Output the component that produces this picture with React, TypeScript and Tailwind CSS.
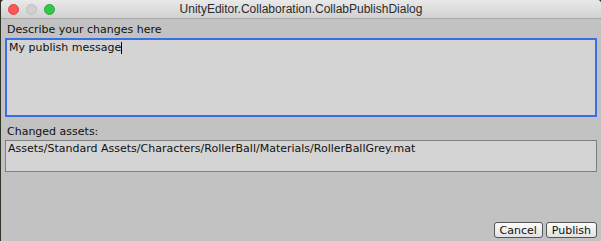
import React from "react";

const uiFont = { fontFamily: '"DejaVu Sans", "Liberation Sans", sans-serif' };

function TrafficLights() {
  return (
    <div className="flex items-center gap-[7px] pl-[7px]">
      <span className="w-[11px] h-[11px] rounded-full bg-[#fc5753] border border-[#df4744]" />
      <span className="w-[11px] h-[11px] rounded-full bg-[#d0d0d0] border border-[#bdbdbd]" />
      <span className="w-[11px] h-[11px] rounded-full bg-[#33c748] border border-[#27aa35]" />
    </div>
  );
}

function DialogButton({ label }: { label: string }) {
  return (
    <button
      className="h-[16px] px-[5px] rounded-[3px] border border-[#555] bg-gradient-to-b from-[#fbfbfb] to-[#e2e2e2] text-[11px] leading-none text-[#111]"
      style={uiFont}
    >
      {label}
    </button>
  );
}

export default function App() {
  return (
    <div className="w-[601px] h-[241px] bg-[#2e3528] pl-px overflow-hidden">
      <div className="h-full flex flex-col bg-[#c2c2c2] rounded-t-[4px] overflow-hidden">
        <div className="relative h-[19px] shrink-0 flex items-center bg-gradient-to-b from-[#e9e9e9] to-[#d1d1d1] border-b border-[#a9a9a9]">
          <TrafficLights />
          <div
            className="absolute inset-0 flex items-center justify-center text-[12px] text-[#2b2b2b]"
            style={{ fontFamily: '"Liberation Sans", Arial, sans-serif' }}
          >
            UnityEditor.Collaboration.CollabPublishDialog
          </div>
        </div>

        <div className="flex-1 flex flex-col px-[4px] pr-[4px] text-[11px] text-[#111]" style={uiFont}>
          <div className="mt-[3px] h-[16px] leading-[16px] pl-[2px]">Describe your changes here</div>
          <div className="h-[79px] border-2 border-[#3a6ee6] bg-[#d4d4d4] px-[2px] leading-[15px]">
            My publish message<span className="inline-block w-px h-[12px] bg-black align-middle" />
          </div>
          <div className="mt-[6px] h-[17px] leading-[17px] pl-[2px]">Changed assets:</div>
          <div className="h-[32px] border border-[#7f7f7f] bg-[#d4d4d4] px-[2px] leading-[16px]">
            Assets/Standard Assets/Characters/RollerBall/Materials/RollerBallGrey.mat
          </div>
          <div className="flex-1" />
          <div className="flex justify-end gap-[3px] mb-[3px]">
            <DialogButton label="Cancel" />
            <DialogButton label="Publish" />
          </div>
        </div>
      </div>
    </div>
  );
}
